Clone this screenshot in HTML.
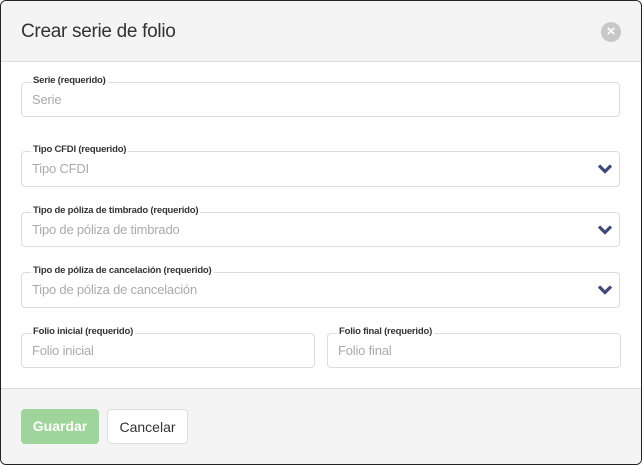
<!DOCTYPE html>
<html><head><style>
*{box-sizing:border-box;margin:0;padding:0}
body{width:642px;height:465px;background:#fff;font-family:"Liberation Sans",sans-serif;overflow:hidden}
.m{position:absolute;left:0;top:0;width:642px;height:465px;border:1px solid #222;border-radius:6px;overflow:hidden;background:#fff}
.hd{position:absolute;left:0;top:0;width:640px;height:61px;background:#f4f4f4;border-bottom:1px solid #ddd}
.hd h1{position:absolute;left:20px;top:20px;font-weight:normal;font-size:19px;color:#333;letter-spacing:-0.3px}
.x{position:absolute;left:600px;top:21px;width:20px;height:20px;border-radius:50%;background:#c8c8c8;color:#fff;font-size:15px;font-weight:bold;text-align:center;line-height:20px}
.f{position:absolute;border:1px solid #ddd;border-radius:4px;height:35px;background:#fff}
.f label{position:absolute;left:9px;top:-8px;background:#fff;padding:0 2px;font-size:9.5px;font-weight:bold;color:#333;letter-spacing:-0.2px;line-height:12px}
.f span{position:absolute;left:10px;top:9px;font-size:13px;color:#aaa;letter-spacing:-0.2px}
.f svg{position:absolute;right:6px;top:11px}
.ft{position:absolute;left:0;top:387px;width:640px;height:77px;background:#f4f4f4;border-top:1px solid #ddd}
.b{position:absolute;top:408px;height:35px;border-radius:4px;font-size:14px;text-align:center;line-height:34px}
</style></head><body><div class="m">
<div class="hd"><h1>Crear serie de folio</h1><div class="x">×</div></div>
<div class="f" style="left:20px;top:81px;width:599px"><label>Serie (requerido)</label><span>Serie</span></div>
<div class="f" style="left:20px;top:150px;width:599px;height:36px"><label>Tipo CFDI (requerido)</label><span>Tipo CFDI</span><svg width="16" height="12" viewBox="0 0 16 12"><path d="M2 2.5l6 6 6-6" stroke="#3d4a7a" stroke-width="3.2" fill="none"/></svg></div>
<div class="f" style="left:20px;top:211px;width:599px"><label>Tipo de póliza de timbrado (requerido)</label><span>Tipo de póliza de timbrado</span><svg width="16" height="12" viewBox="0 0 16 12"><path d="M2 2.5l6 6 6-6" stroke="#3d4a7a" stroke-width="3.2" fill="none"/></svg></div>
<div class="f" style="left:20px;top:271px;width:599px;height:36px"><label>Tipo de póliza de cancelación (requerido)</label><span>Tipo de póliza de cancelación</span><svg width="16" height="12" viewBox="0 0 16 12"><path d="M2 2.5l6 6 6-6" stroke="#3d4a7a" stroke-width="3.2" fill="none"/></svg></div>
<div class="f" style="left:20px;top:332px;width:294px"><label>Folio inicial (requerido)</label><span>Folio inicial</span></div>
<div class="f" style="left:326px;top:332px;width:294px"><label>Folio final (requerido)</label><span>Folio final</span></div>
<div class="ft"></div>
<div class="b" style="left:20px;width:78px;background:#9fd59a;color:#fff;font-weight:bold">Guardar</div>
<div class="b" style="left:106px;width:81px;background:#fff;border:1px solid #ddd;color:#333">Cancelar</div>
</div></body></html>
